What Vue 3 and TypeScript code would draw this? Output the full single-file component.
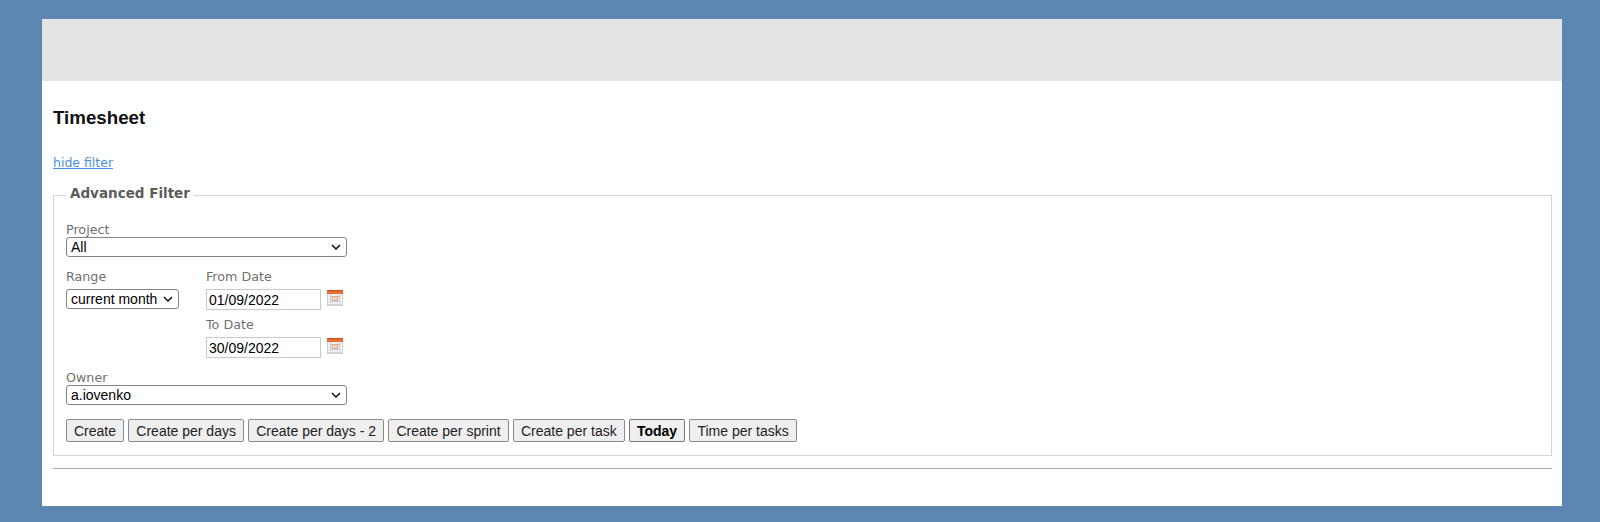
<template>
  <div class="page">
    <div class="card">
      <div class="top-bar"></div>
      <div class="content">
        <h1>Timesheet</h1>
        <a class="toggle" href="#">hide filter</a>
        <fieldset class="filter">
          <legend>Advanced Filter</legend>
          <div class="field project">
            <label>Project</label>
            <select class="wide"><option>All</option></select>
          </div>
          <div class="dates">
            <div class="field">
              <label class="spaced">Range</label>
              <select class="range"><option>current month</option></select>
            </div>
            <div class="date-col">
              <div v-for="d in dates" :key="d.label" class="field date-field">
                <label class="spaced">{{ d.label }}</label>
                <div class="date-row">
                  <input type="text" :value="d.value" />
                  <svg class="cal" width="16" height="16" viewBox="0 0 16 16">
                    <rect x="0" y="0" width="16" height="16" fill="#d2d2d2" />
                    <rect x="0" y="0" width="16" height="1" fill="#b0501f" />
                    <rect x="0" y="1" width="16" height="3" fill="#e8702c" />
                    <rect x="1" y="4" width="14" height="10" fill="#eef0f6" />
                    <path d="M3 6.500h10M3 11.500h10M3.500 5v8M12.500 5v8" stroke="#c3c9dc" fill="none" />
                    <rect x="5.500" y="6.500" width="5" height="4" fill="#f6dcc8" stroke="#e9a477" />
                  </svg>
                </div>
              </div>
            </div>
          </div>
          <div class="field owner">
            <label>Owner</label>
            <select class="wide"><option>a.iovenko</option></select>
          </div>
          <div class="actions">
            <button
              v-for="b in buttons"
              :key="b"
              type="button"
              :class="{ active: b === 'Today' }"
            >{{ b }}</button>
          </div>
        </fieldset>
        <hr />
      </div>
    </div>
  </div>
</template>

<script setup lang="ts">
const dates = [
  { label: 'From Date', value: '01/09/2022' },
  { label: 'To Date', value: '30/09/2022' }
];

const buttons: string[] = [
  'Create',
  'Create per days',
  'Create per days - 2',
  'Create per sprint',
  'Create per task',
  'Today',
  'Time per tasks'
];
</script>

<style>
html,
body {
  margin: 0;
  background: #5b87b2;
}
</style>

<style scoped>
.page {
  height: 522px;
  padding: 19px 38px 16px 42px;
  box-sizing: border-box;
  background: #5b87b2;
  font-family: "DejaVu Sans", sans-serif;
}
.card {
  height: 487px;
  background: #fff;
  box-sizing: border-box;
}
.top-bar {
  height: 62px;
  background: #e4e4e4;
}
.content {
  padding: 0 10px 0 11px;
}
h1 {
  margin: 0;
  padding-top: 26px;
  font: bold 18.720px/22px "Liberation Sans", sans-serif;
  color: #111;
}
.toggle {
  display: block;
  margin-top: 26px;
  height: 16px;
  font-size: 12.500px;
  line-height: 16px;
  color: #4a90e2;
}
.filter {
  margin: 14px 0 0;
  padding: 12px 12px 4px;
  height: 271px;
  box-sizing: border-box;
  border: 1px solid #d4d4d4;
  min-width: 0;
}
legend {
  padding: 0 4px 4px;
  font-size: 13.500px;
  font-weight: bold;
  line-height: 16px;
  color: #5c5c5c;
}
.field {
  display: flex;
  flex-direction: column;
  align-items: flex-start;
}
label {
  font-size: 12.700px;
  line-height: 14px;
  color: #707070;
}
label.spaced {
  line-height: 16px;
  margin-bottom: 4px;
}
select {
  appearance: none;
  box-sizing: border-box;
  height: 20px;
  margin: 0;
  padding: 0 0 0 4px;
  font: 14px "Liberation Sans", sans-serif;
  color: #000;
  background: #fff url("data:image/svg+xml,%3Csvg xmlns='http://www.w3.org/2000/svg' width='10' height='6'%3E%3Cpath d='M1 1l4 4 4-4' fill='none' stroke='%23111' stroke-width='1.500'/%3E%3C/svg%3E") no-repeat right 5px center;
  border: 1px solid #858585;
  border-radius: 3px;
}
.wide {
  width: 281px;
}
.project {
  margin-top: 6px;
}
.dates {
  display: flex;
  margin-top: 12px;
}
.range {
  width: 113px;
}
.date-col {
  margin-left: 27px;
}
.date-field + .date-field {
  margin-top: 7px;
}
.date-row {
  display: flex;
  align-items: flex-start;
}
input {
  box-sizing: border-box;
  width: 115px;
  height: 21px;
  margin: 0;
  padding: 1px 2px;
  font: 14px "Liberation Sans", sans-serif;
  color: #000;
  border: 1px solid #c8c8c8;
  outline: none;
}
.cal {
  margin-left: 6px;
  margin-top: 1px;
}
.owner {
  margin-top: 13px;
}
.actions {
  display: flex;
  gap: 4.300px;
  margin-top: 14px;
}
button {
  box-sizing: border-box;
  height: 23px;
  margin: 0;
  padding: 1px 7px;
  font: 14px "Liberation Sans", sans-serif;
  color: #222;
  background: #efefef;
  border: 1px solid #8a8a8a;
  border-radius: 2px;
}
button.active {
  font-weight: bold;
  color: #000;
  border-color: #767676;
}
hr {
  margin: 12px 0 0;
  height: 1px;
  border: 0;
  background: #aaa;
}
</style>
